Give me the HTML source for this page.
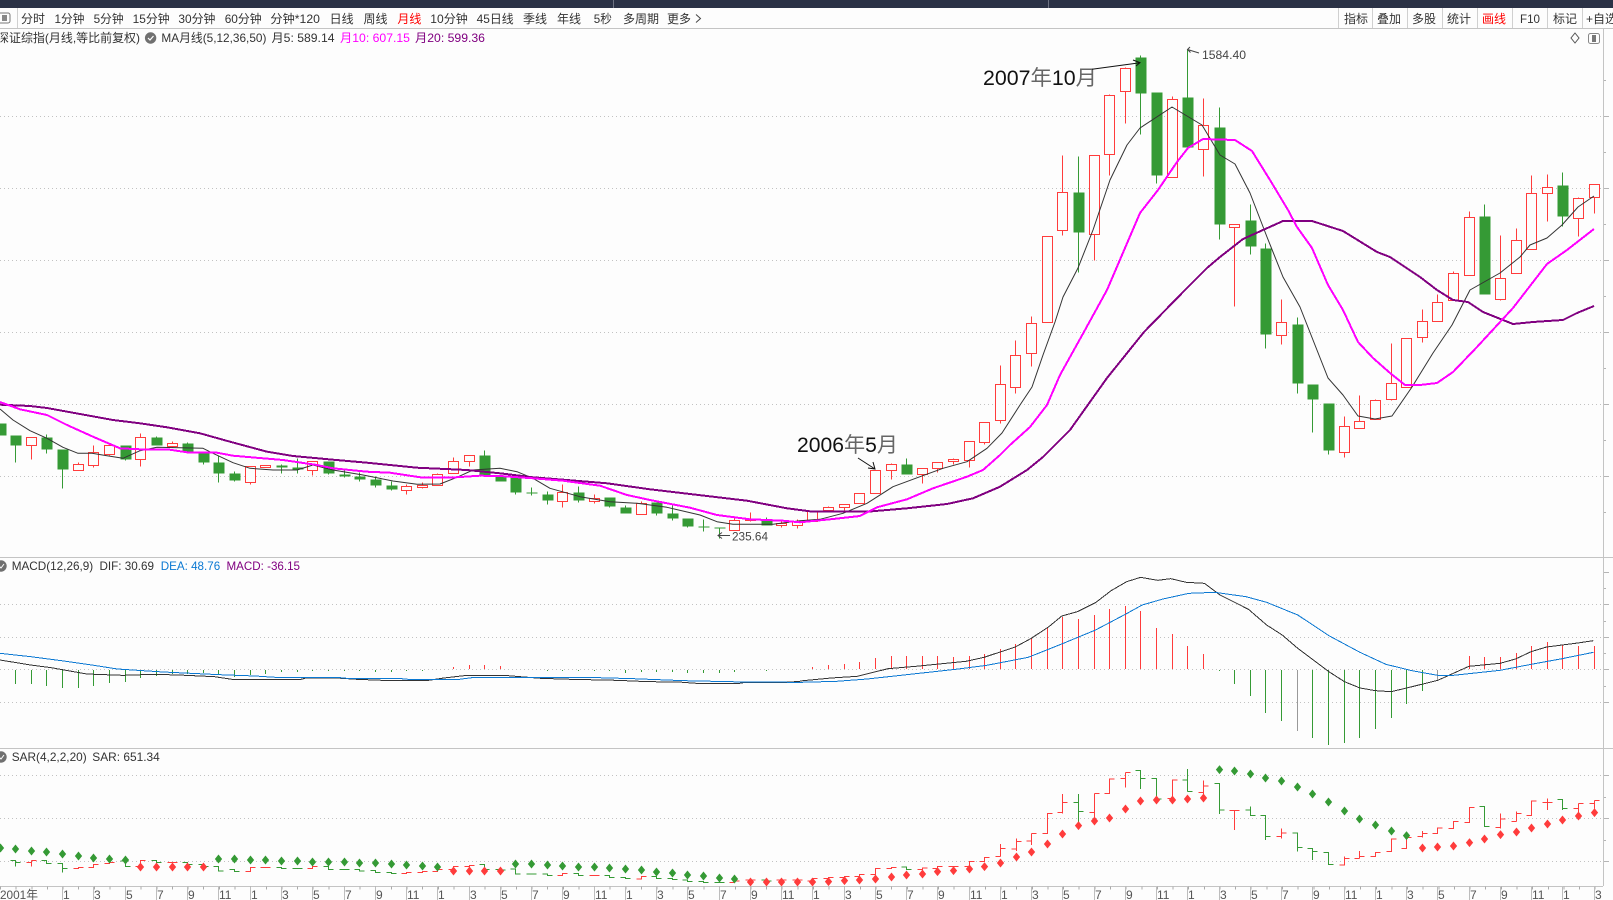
<!DOCTYPE html>
<html><head><meta charset="utf-8"><title>K</title>
<style>
html,body{margin:0;padding:0;background:#fdfdfd;width:1613px;height:900px;overflow:hidden}
svg{display:block;position:absolute;left:0;top:0}
text{font-family:"Liberation Sans","WenQuanYi Zen Hei","Noto Sans CJK SC",sans-serif;font-size:12px;fill:#333}
.c{shape-rendering:crispEdges}
.m{fill:none;stroke-linejoin:round}
.ax text{fill:#555}
</style></head><body>
<svg width="1613" height="900" viewBox="0 0 1613 900" xmlns="http://www.w3.org/2000/svg">
<rect width="1613" height="900" fill="#fdfdfd"/>
<!-- top bar -->
<rect width="1613" height="8" fill="#2b3246"/>
<path class="c" d="M613.5 0V8M1048.5 0V8" stroke="#6d7282" fill="none"/>
<!-- frame -->
<g class="c" stroke="#c4c4c4" fill="none">
<path d="M0 28.5H1613M0 557.5H1613M0 748.5H1613M0 886.5H1603M1603.5 29V886"/>
<path d="M17.5 8V28M1338.5 8V28M1372.5 8V28M1407.5 8V28M1442.5 8V28M1477.5 8V28M1512.5 8V28M1547.5 8V28M1582.5 8V28" stroke="#d0d0d0"/>
</g>
<!-- dotted grid -->
<path class="c" fill="none" stroke="#c2c2c2" stroke-dasharray="1 3" d="M0 116.5H1603M0 188.5H1603M0 260.5H1603M0 332.5H1603M0 404.5H1603M0 476.5H1603M0 604.5H1603M0 637.5H1603M0 669.5H1603M0 702.5H1603M0 775.5H1603M0 818.5H1603M0 861.5H1603"/>
<!-- right ticks -->
<path class="c" fill="none" stroke="#b5b5b5" d="M1604 116.5h5M1604 188.5h5M1604 260.5h5M1604 332.5h5M1604 404.5h5M1604 476.5h5M1604 80.5h2M1604 152.5h2M1604 224.5h2M1604 296.5h2M1604 368.5h2M1604 440.5h2M1604 512.5h2M1604 604.5h5M1604 637.5h5M1604 669.5h5M1604 702.5h5M1604 572.5h5M1604 588.5h2M1604 621.5h2M1604 653.5h2M1604 686.5h2M1604 775.5h5M1604 818.5h5M1604 861.5h5M1604 797.5h2M1604 840.5h2"/>

<!-- toolbar -->
<rect x="-4" y="13" width="14" height="10" rx="2" fill="none" stroke="#777"/>
<rect x="2" y="15" width="5" height="6" fill="#888"/>
<text x="21" y="23" textLength="24" lengthAdjust="spacingAndGlyphs">分时</text>
<text x="54.5" y="23" textLength="30" lengthAdjust="spacingAndGlyphs">1分钟</text>
<text x="93.6" y="23" textLength="30" lengthAdjust="spacingAndGlyphs">5分钟</text>
<text x="132.6" y="23" textLength="37" lengthAdjust="spacingAndGlyphs">15分钟</text>
<text x="178.4" y="23" textLength="37" lengthAdjust="spacingAndGlyphs">30分钟</text>
<text x="224.7" y="23" textLength="37" lengthAdjust="spacingAndGlyphs">60分钟</text>
<text x="270.4" y="23" textLength="49.5" lengthAdjust="spacingAndGlyphs">分钟*120</text>
<text x="329.6" y="23" textLength="24" lengthAdjust="spacingAndGlyphs">日线</text>
<text x="363.5" y="23" textLength="24" lengthAdjust="spacingAndGlyphs">周线</text>
<text x="397.4" y="23" textLength="24" lengthAdjust="spacingAndGlyphs" style="fill:#f00">月线</text>
<text x="430.3" y="23" textLength="37.5" lengthAdjust="spacingAndGlyphs">10分钟</text>
<text x="476.6" y="23" textLength="37" lengthAdjust="spacingAndGlyphs">45日线</text>
<text x="523" y="23" textLength="24" lengthAdjust="spacingAndGlyphs">季线</text>
<text x="557" y="23" textLength="24" lengthAdjust="spacingAndGlyphs">年线</text>
<text x="593.8" y="23" textLength="18" lengthAdjust="spacingAndGlyphs">5秒</text>
<text x="623" y="23" textLength="36" lengthAdjust="spacingAndGlyphs">多周期</text>
<text x="667" y="23" textLength="24" lengthAdjust="spacingAndGlyphs">更多</text>
<path d="M696 14.5l4.5 4-4.5 4" fill="none" stroke="#444"/>
<text x="1344" y="23" textLength="24" lengthAdjust="spacingAndGlyphs">指标</text>
<text x="1377" y="23" textLength="24" lengthAdjust="spacingAndGlyphs">叠加</text>
<text x="1412" y="23" textLength="24" lengthAdjust="spacingAndGlyphs">多股</text>
<text x="1447" y="23" textLength="24" lengthAdjust="spacingAndGlyphs">统计</text>
<text x="1482" y="23" textLength="24" lengthAdjust="spacingAndGlyphs" style="fill:#f00">画线</text>
<text x="1520" y="23" textLength="20" lengthAdjust="spacingAndGlyphs">F10</text>
<text x="1553" y="23" textLength="24" lengthAdjust="spacingAndGlyphs">标记</text>
<text x="1586" y="23" textLength="31" lengthAdjust="spacingAndGlyphs">+自选</text>

<!-- legend -->
<text x="-3" y="42" textLength="143" lengthAdjust="spacingAndGlyphs">深证综指(月线,等比前复权)</text>
<circle cx="150.6" cy="38" r="5.7" fill="#707070"/>
<path d="M148 38l2 2 3.5-4" fill="none" stroke="#fff" stroke-width="1.2"/>
<text x="161.4" y="42" textLength="105" lengthAdjust="spacingAndGlyphs">MA月线(5,12,36,50)</text>
<text x="271.5" y="42" textLength="63" lengthAdjust="spacingAndGlyphs">月5: 589.14</text>
<text x="340" y="42" textLength="70" lengthAdjust="spacingAndGlyphs" style="fill:#f0f">月10: 607.15</text>
<text x="415" y="42" textLength="70" lengthAdjust="spacingAndGlyphs" style="fill:#800080">月20: 599.36</text>
<path d="M1575 33l4 5-4 5-4-5z" fill="none" stroke="#555"/>
<rect x="1588.5" y="33.5" width="11" height="10" rx="2" fill="none" stroke="#888"/>
<rect x="1592" y="35" width="4" height="7" fill="#777"/>

<!-- candle wicks & bodies -->
<g class="c" transform="translate(.5,.5)">
<path fill="none" stroke="#359a35" d="M15 445V462M46 434V453M62 469V488M125 459V460M156 436V445M187 442V453M203 462V464M218 455V482M234 471V481M281 464V473M297 458V473M328 473V474M344 470V477M359 472V481M375 476V487M391 481V490M484 450V476M515 492V494M531 487V495M547 491V504M578 486V502M609 506V507M625 505V507M656 513V515M672 504V520M687 526V527M703 519V531M719 527V538M766 517V519M906 458V464M1078 156V272M1140 55V134M1156 175V183M1187 49V97M1219 107V239M1250 204V254M1265 243V348M1297 317V393M1312 399V432M1328 450V454M1484 204V216M1562 172V226"/>
<path fill="#359a35" d="M-5 423h11v12h-11zM10 435h11v10h-11zM41 437h11v12h-11zM57 449h11v20h-11zM120 445h11v14h-11zM151 437h11v8h-11zM182 443h11v9h-11zM198 452h11v10h-11zM213 462h11v11h-11zM229 473h11v7h-11zM276 465h11v2h-11zM292 467h11v2h-11zM323 461h11v12h-11zM339 474h11v2h-11zM354 476h11v3h-11zM370 479h11v6h-11zM386 485h11v4h-11zM479 455h11v20h-11zM495 475h11v6h-11zM510 477h11v15h-11zM526 492h11v1h-11zM542 494h11v6h-11zM573 492h11v8h-11zM604 497h11v9h-11zM620 507h11v6h-11zM651 502h11v11h-11zM667 513h11v5h-11zM682 518h11v8h-11zM698 526h11v1h-11zM714 527h11v1h-11zM761 519h11v6h-11zM901 464h11v10h-11zM1073 192h11v40h-11zM1135 57h11v36h-11zM1151 92h11v83h-11zM1182 97h11v50h-11zM1214 127h11v97h-11zM1245 220h11v26h-11zM1260 248h11v86h-11zM1292 324h11v59h-11zM1307 384h11v15h-11zM1323 403h11v47h-11zM1479 216h11v78h-11zM1557 185h11v31h-11z"/>
<path fill="none" stroke="#ff3c3c" d="M31 445V459M78 462V464M93 445V467M109 454V455M140 433V466M172 441V447M250 482V484M312 470V475M406 484V494M422 482V488M437 473V474M453 457V461M469 461V466M562 484V507M594 494V503M641 501V503M734 518V520M750 512V521M781 521V527M797 519V528M828 506V511M844 507V512M891 463V479M922 474V483M937 468V472M953 458V464M969 460V467M984 442V444M1000 365V423M1015 340V393M1031 316V366M1062 155V235M1094 234V260M1109 94V175M1125 67V123M1172 96V99M1203 98V176M1234 227V306M1281 299V344M1344 416V457M1359 395V421M1375 399V400M1391 343V400M1422 309V342M1437 294V302M1453 271V273M1469 211V217M1500 235V300M1516 228V240M1531 175V193M1547 174V221M1578 197V236M1594 197V213"/>
<path fill="#fdfdfd" stroke="#ff3c3c" d="M26 437h10v8h-10zM73 464h10v6h-10zM88 452h10v13h-10zM104 445h10v9h-10zM135 437h10v22h-10zM167 443h10v3h-10zM245 466h10v16h-10zM260 465h10v2h-10zM307 461h10v9h-10zM401 486h10v4h-10zM417 485h10v2h-10zM432 474h10v11h-10zM448 461h10v12h-10zM464 455h10v6h-10zM557 492h10v9h-10zM589 498h10v3h-10zM636 503h10v11h-10zM729 520h10v10h-10zM745 519h10v1h-10zM776 523h10v2h-10zM792 521h10v4h-10zM807 511h10v10h-10zM823 507h10v3h-10zM839 504h10v3h-10zM854 493h10v10h-10zM870 470h10v23h-10zM886 464h10v6h-10zM917 468h10v6h-10zM932 462h10v6h-10zM948 459h10v2h-10zM964 441h10v19h-10zM979 422h10v20h-10zM995 384h10v36h-10zM1010 355h10v32h-10zM1026 323h10v30h-10zM1042 236h10v86h-10zM1057 192h10v38h-10zM1089 155h10v79h-10zM1104 95h10v59h-10zM1120 68h10v23h-10zM1167 99h10v78h-10zM1198 125h10v24h-10zM1229 224h10v3h-10zM1276 322h10v13h-10zM1339 426h10v26h-10zM1354 421h10v7h-10zM1370 400h10v19h-10zM1386 383h10v16h-10zM1401 338h10v49h-10zM1417 321h10v16h-10zM1432 302h10v19h-10zM1448 273h10v27h-10zM1464 217h10v58h-10zM1495 278h10v21h-10zM1511 240h10v33h-10zM1526 193h10v56h-10zM1542 187h10v6h-10zM1573 198h10v20h-10zM1589 184h10v13h-10z"/>
</g>

<!-- MA lines -->
<polyline class="m" stroke="#333" stroke-width="1" points="0,409 13,420 30,430.7 47,438.3 63,447.3 78,453.3 92,453.3 107,455.7 123,458.3 140,450.7 157,447.3 203,448.3 213,453.3 233,462.7 250,468.3 273,470 297,470 313,465 333,470 363,475 393,481 417,484.3 440,484 457,477.3 473,470 500,468.3 517,471.7 533,478.3 550,488.3 580,496.7 610,501.7 637,503.3 667,507.3 700,515 717,521.7 733,524.3 773,524.3 800,520.7 820,519.3 843,513.3 867,503.3 893,486.7 920,476.7 943,468.3 967,461.7 987,448.3 1002,433 1020,405 1032,387 1043,355 1055,322 1063,297 1078,268 1093,230 1110,180 1127,145 1140,128 1172,107 1202,125 1217,150 1220,155 1235,164 1250,193 1267,237 1283,277 1300,307 1313,340 1328,378 1343,395 1358,416 1375,419 1392,416 1412,387 1433,353 1452,325 1470,290 1500,273 1520,257 1530,245 1547,238 1562,225 1578,207 1594,196"/>
<polyline class="m c" stroke="#800080" stroke-width="2" points="0,404.7 30,406 47,408 80,414 113,420 140,423.3 167,427.3 200,433.3 230,441.7 267,451.7 293,456 333,459.7 367,462.7 417,467.7 467,470 500,473.3 533,477.3 567,480 607,483.3 650,489.3 707,496 747,500.7 787,508.3 813,511.7 867,511.7 907,508.3 947,504 973,498.3 1000,486.7 1027,470 1043,457 1070,430 1107,378 1144,332 1185,290 1207,268 1220,257 1243,239 1263,230 1283,221 1312,221 1343,231 1377,252 1390,257 1420,277 1437,290 1453,300 1468,302 1483,312 1513,324 1533,322 1563,320 1577,313 1594,306"/>
<polyline class="m c" stroke="#f0f" stroke-width="2" points="0,402 20,409.3 47,415 67,425 93,436.7 120,448.3 140,449.3 167,449.3 187,452.3 217,452.7 233,455.7 263,458.3 283,460 317,465 333,468.3 367,471.7 390,472.7 423,477.7 450,477.7 480,475.7 500,476 533,478.3 563,480.7 600,485.7 627,495 650,500 690,507.7 717,515 750,519.3 783,520.7 800,522.3 833,519 860,516 877,507.3 907,499.3 933,488.3 967,476.7 983,470 1000,455 1010,445 1030,427 1047,405 1060,375 1085,330 1107,290 1140,213 1158,190 1177,162 1188,148 1203,139 1235,140 1252,151 1270,180 1288,210 1297,227 1312,248 1328,285 1343,310 1358,342 1373,358 1390,373 1405,385 1420,385 1437,383 1453,372 1477,347 1513,308 1547,264 1567,250 1594,229"/>

<!-- annotations -->
<text x="983" y="85" textLength="114" lengthAdjust="spacingAndGlyphs" style="font-size:21px;fill:#111">2007<tspan style="fill:#666">年</tspan>10<tspan style="fill:#666">月</tspan></text>
<text x="797" y="452" textLength="101" lengthAdjust="spacingAndGlyphs" style="font-size:21px;fill:#111">2006<tspan style="fill:#666">年</tspan>5<tspan style="fill:#666">月</tspan></text>
<path fill="none" stroke="#111" d="M1092 69.3L1140 62.7M1133 60L1140 62.7L1136 66M858 458L875 469M868 468L875 469L873 462"/>
<text x="732" y="540.5" textLength="36" lengthAdjust="spacingAndGlyphs" style="fill:#444">235.64</text>
<text x="1202" y="59" textLength="44" lengthAdjust="spacingAndGlyphs" style="fill:#444">1584.40</text>
<path fill="none" stroke="#444" d="M730 535.5H718M722 532.5L718 535.5L722 538.5M1199 53L1187.5 49.5M1190 47L1187.5 49.5L1190.5 52.5"/>

<!-- MACD bars -->
<path class="c" transform="translate(.5,0)" fill="none" stroke="#359a35" d="M15 670V684M31 670V684M46 670V686M62 670V688M78 670V688M93 670V686M109 670V683M125 670V682M140 670V678M156 670V676M172 670V674M187 670V674M203 670V673M218 670V675M234 670V677M250 670V675M265 670V674M281 670V672M297 670V672M312 670V671M328 670V671M344 670V671M359 670V671M375 670V672M391 670V672M406 670V671M422 670V671M547 670V671M562 670V671M578 670V671M594 670V671M609 670V671M625 670V673M641 670V672M656 670V672M672 670V672M687 670V673M703 670V673M719 670V673M734 670V672M766 670V671M1219 670V671M1234 670V684M1250 670V696M1265 670V713M1281 670V721M1312 670V738M1328 670V745M1344 670V743M1359 670V738M1375 670V729M1391 670V718M1406 670V704M1422 670V691"/>
<path class="c" transform="translate(.5,0)" fill="none" stroke="#999" d="M1297 670V731M1437 670V680"/>
<path class="c" transform="translate(.5,0)" fill="none" stroke="#ff3c3c" d="M453 669V667M469 669V665M484 669V665M500 669V666M812 669V667M828 669V665M844 669V664M859 669V662M875 669V658M891 669V656M906 669V656M922 669V656M937 669V656M953 669V657M969 669V656M984 669V654M1000 669V649M1015 669V644M1031 669V638M1047 669V627M1062 669V617M1078 669V619M1094 669V615M1109 669V609M1125 669V606M1140 669V611M1156 669V628M1172 669V634M1187 669V646M1203 669V654M1469 669V656M1484 669V657M1500 669V657M1516 669V653M1531 669V646M1547 669V642M1562 669V645M1578 669V646M1594 669V646"/>
<!-- MACD lines -->
<g transform="translate(0,550) scale(.5102,.33333)">
<polyline class="m c" vector-effect="non-scaling-stroke" stroke="#333" points="0,330 60,345 100,353 170,372 240,376 300,373 350,375 420,380 455,388 590,388 600,384 660,384 700,388 750,391 840,391 870,384 910,377 995,377 1060,385 1120,388 1210,391 1270,395 1330,396 1365,400 1450,400 1460,397 1540,397 1568,394"/>
<polyline class="m c" vector-effect="non-scaling-stroke" stroke="#0a78d2" points="0,310 60,320 120,332 180,345 230,357 320,366 430,374 500,378 540,382 660,382 680,385 780,385 800,388 900,388 930,382 1150,382 1240,386 1340,392 1460,396 1568,397"/>
</g>
<g transform="translate(800,550) scale(.5185,.33333)">
<polyline class="m c" vector-effect="non-scaling-stroke" stroke="#333" points="0,393 60,384 110,379 170,356 230,348 320,334 355,322 415,291 445,266 480,230 505,198 535,185 570,158 600,122 630,95 657,82 690,91 715,86 745,97 780,100 810,135 865,178 900,225 930,255 960,295 1020,365 1050,395 1080,414 1110,422 1140,425 1170,414 1230,391 1290,349 1350,340 1380,327 1410,305 1440,291 1500,279 1530,272"/>
<polyline class="m c" vector-effect="non-scaling-stroke" stroke="#0a78d2" points="0,397 70,394 130,387 200,375 300,358 360,346 440,322 500,285 570,240 625,195 660,165 700,147 750,130 800,127 860,140 900,157 960,195 1020,257 1080,307 1130,343 1180,362 1230,376 1260,376 1350,361 1410,343 1470,326 1530,307"/>
</g>
<!-- MACD legend -->
<circle cx="1" cy="566" r="5.7" fill="#707070"/>
<path d="M-1 566l2 2 3-4" fill="none" stroke="#fff"/>
<text x="11.7" y="570" textLength="81.5" lengthAdjust="spacingAndGlyphs">MACD(12,26,9)</text>
<text x="99.5" y="570" textLength="54.5" lengthAdjust="spacingAndGlyphs">DIF: 30.69</text>
<text x="160.7" y="570" textLength="59.5" lengthAdjust="spacingAndGlyphs" style="fill:#0a78d2">DEA: 48.76</text>
<text x="226.5" y="570" textLength="73.5" lengthAdjust="spacingAndGlyphs" style="fill:#800080">MACD: -36.15</text>

<!-- SAR legend -->
<circle cx="1" cy="757" r="5.7" fill="#707070"/>
<path d="M-1 757l2 2 3-4" fill="none" stroke="#fff"/>
<text x="11.7" y="761" textLength="75" lengthAdjust="spacingAndGlyphs">SAR(4,2,2,20)</text>
<text x="92.3" y="761" textLength="67.5" lengthAdjust="spacingAndGlyphs">SAR: 651.34</text>

<!-- SAR OHLC -->
<g transform="translate(.5,745) scale(1,.33333)">
<path class="c" vector-effect="non-scaling-stroke" fill="none" stroke="#ff3c3c" d="M26 352H31M31 346V365M31 346H36M73 370H78V367H83M88 367H93V358H98M104 356H109V352H114M135 364H140V346H145M167 352H177M245 380H250V367H255M260 367H270M307 370H312V365H317M401 385H406V383H411M417 382H422V380H427M432 379H437V374H442M448 374H453V364H458M464 364H469V361H474M557 392H562V385H567M589 392H599M636 402H641V394H646M729 412H734V408H739M745 405H755M776 405H786M792 405H802M807 408H812V400H817M823 400H828V398H833M839 398H844V395H849M854 395H859V388H864M870 388H875V371H880M886 371H891V367H896M917 373H922V369H927M932 370H937V364H942M948 364H958M964 364H969V350H974M979 350H984V337H989M995 335H1000M1000 297V335M1000 310H1005M1011 312H1016M1016 280V318M1016 289H1021M1026 288H1031M1031 265V300M1031 265H1036M1042 265H1047V205H1052M1057 202H1062M1062 147V205M1062 172H1067M1089 203H1094M1094 145V235M1094 145H1099M1104 145H1109V102H1114M1120 100H1125M1125 82V127M1125 82H1130M1167 160H1172V105H1177M1198 143H1203M1203 106V170M1203 123H1208M1229 197H1239M1234 197V255M1276 274H1281M1281 250V280M1281 264H1286M1339 360H1344V335M1344 340H1349M1354 340H1359M1359 318V340M1359 334H1364M1370 334H1375V322H1380M1386 320H1391V282H1396M1401 310H1406V278H1411M1417 275H1422M1422 258V278M1422 265H1427M1432 265H1437V249H1442M1448 250H1453V229H1458M1464 232H1469V188H1474M1495 248H1500M1500 205V250M1500 222H1505M1511 229H1516M1516 200V229M1516 205H1521M1526 212H1531V168H1536M1542 172H1552M1547 160V195M1573 190H1578M1578 176V202M1578 176H1583M1589 176H1594M1594 166V190M1594 166H1599"/>
<path class="c" vector-effect="non-scaling-stroke" fill="none" stroke="#359a35" d="M10 347H15V365M15 352H20M41 346H46V355H51M57 355H62V383M62 370H67M120 348H125V364H130M151 346H156V352H161M182 352H187V358H192M198 358H203V365H208M213 365H218V378H223M229 373H234V380H239M276 367H281V370H286M292 370H302M323 364H328V373H333M339 373H349M354 373H359V378H364M370 377H375V382H380M386 382H391V385H396M479 358H484V373H489M495 373H500V375H505M510 372H515V387H520M526 387H536M542 387H547V392H552M573 385H578V392H583M604 392H609V397H614M620 397H625V400H630M651 394H656V400H661M667 400H672V404H677M682 405H687V409H692M698 410H703V412H708M714 412H724M761 405H766V408H771M901 366H906V373H911M1073 172H1078M1078 147V240M1078 200H1083M1135 76H1140V132M1140 100H1145M1151 100H1156V162H1161M1182 105H1187M1187 72V139M1187 139H1192M1214 115H1219V207M1219 195H1224M1245 195H1250M1250 184V212H1255M1260 212H1265V285M1265 274H1270M1292 264H1297V320M1297 307H1302M1307 310H1312V345M1312 320H1317M1323 322H1328V358H1333M1479 185H1484V244H1489M1557 163H1562V195M1562 190H1567"/>
<path vector-effect="non-scaling-stroke" stroke="#359a35" stroke-width="1" fill="#359a35" d="M0 298l3 11-3 11-3-11zM15 301l3 11-3 11-3-11zM31 307l3 11-3 11-3-11zM46 310l3 11-3 11-3-11zM62 316l3 11-3 11-3-11zM78 322l3 11-3 11-3-11zM93 328l3 11-3 11-3-11zM109 331l3 11-3 11-3-11zM125 334l3 11-3 11-3-11zM218 331l3 11-3 11-3-11zM234 331l3 11-3 11-3-11zM250 334l3 11-3 11-3-11zM265 334l3 11-3 11-3-11zM281 337l3 11-3 11-3-11zM297 337l3 11-3 11-3-11zM312 340l3 11-3 11-3-11zM328 340l3 11-3 11-3-11zM344 340l3 11-3 11-3-11zM359 343l3 11-3 11-3-11zM375 343l3 11-3 11-3-11zM391 346l3 11-3 11-3-11zM406 349l3 11-3 11-3-11zM422 352l3 11-3 11-3-11zM437 355l3 11-3 11-3-11zM515 346l3 11-3 11-3-11zM531 346l3 11-3 11-3-11zM547 349l3 11-3 11-3-11zM562 352l3 11-3 11-3-11zM578 355l3 11-3 11-3-11zM594 355l3 11-3 11-3-11zM609 358l3 11-3 11-3-11zM625 361l3 11-3 11-3-11zM641 364l3 11-3 11-3-11zM656 370l3 11-3 11-3-11zM672 373l3 11-3 11-3-11zM687 379l3 11-3 11-3-11zM703 382l3 11-3 11-3-11zM719 388l3 11-3 11-3-11zM734 391l3 11-3 11-3-11zM1219 63l3 11-3 11-3-11zM1234 67l3 11-3 11-3-11zM1250 76l3 11-3 11-3-11zM1265 88l3 11-3 11-3-11zM1281 97l3 11-3 11-3-11zM1297 115l3 11-3 11-3-11zM1312 136l3 11-3 11-3-11zM1328 160l3 11-3 11-3-11zM1344 187l3 11-3 11-3-11zM1359 211l3 11-3 11-3-11zM1375 229l3 11-3 11-3-11zM1391 247l3 11-3 11-3-11zM1406 261l3 11-3 11-3-11z"/>
<path vector-effect="non-scaling-stroke" stroke="#ff3c3c" stroke-width="1" fill="#ff3c3c" d="M140 355l3 11-3 11-3-11zM156 355l3 11-3 11-3-11zM172 355l3 11-3 11-3-11zM187 355l3 11-3 11-3-11zM203 355l3 11-3 11-3-11zM453 367l3 11-3 11-3-11zM469 367l3 11-3 11-3-11zM484 367l3 11-3 11-3-11zM500 367l3 11-3 11-3-11zM750 400l3 11-3 11-3-11zM766 400l3 11-3 11-3-11zM781 400l3 11-3 11-3-11zM797 400l3 11-3 11-3-11zM812 400l3 11-3 11-3-11zM828 399l3 11-3 11-3-11zM844 396l3 11-3 11-3-11zM859 394l3 11-3 11-3-11zM875 391l3 11-3 11-3-11zM891 385l3 11-3 11-3-11zM906 379l3 11-3 11-3-11zM922 376l3 11-3 11-3-11zM937 369l3 11-3 11-3-11zM953 366l3 11-3 11-3-11zM969 361l3 11-3 11-3-11zM984 354l3 11-3 11-3-11zM1000 343l3 11-3 11-3-11zM1016 325l3 11-3 11-3-11zM1031 310l3 11-3 11-3-11zM1047 286l3 11-3 11-3-11zM1062 256l3 11-3 11-3-11zM1078 231l3 11-3 11-3-11zM1094 217l3 11-3 11-3-11zM1109 208l3 11-3 11-3-11zM1125 181l3 11-3 11-3-11zM1140 157l3 11-3 11-3-11zM1156 154l3 11-3 11-3-11zM1172 154l3 11-3 11-3-11zM1187 151l3 11-3 11-3-11zM1203 148l3 11-3 11-3-11zM1422 298l3 11-3 11-3-11zM1437 295l3 11-3 11-3-11zM1453 292l3 11-3 11-3-11zM1469 282l3 11-3 11-3-11zM1484 271l3 11-3 11-3-11zM1500 258l3 11-3 11-3-11zM1516 250l3 11-3 11-3-11zM1531 238l3 11-3 11-3-11zM1547 226l3 11-3 11-3-11zM1562 214l3 11-3 11-3-11zM1578 202l3 11-3 11-3-11zM1594 192l3 11-3 11-3-11z"/>
</g>

<!-- bottom axis -->
<path class="c" d="M0 888H1603" stroke="#aaa" stroke-width="3" stroke-dasharray="1 14.634" fill="none"/>
<path class="c" fill="none" stroke="#bdbdbd" d="M62.5 887V900M93.5 887V900M125.5 887V900M156.5 887V900M187.5 887V900M218.5 887V900M250.5 887V900M281.5 887V900M312.5 887V900M344.5 887V900M375.5 887V900M406.5 887V900M437.5 887V900M469.5 887V900M500.5 887V900M531.5 887V900M562.5 887V900M594.5 887V900M625.5 887V900M656.5 887V900M687.5 887V900M719.5 887V900M750.5 887V900M781.5 887V900M812.5 887V900M844.5 887V900M875.5 887V900M906.5 887V900M937.5 887V900M969.5 887V900M1000.5 887V900M1031.5 887V900M1062.5 887V900M1094.5 887V900M1125.5 887V900M1156.5 887V900M1187.5 887V900M1219.5 887V900M1250.5 887V900M1281.5 887V900M1312.5 887V900M1344.5 887V900M1375.5 887V900M1406.5 887V900M1437.5 887V900M1469.5 887V900M1500.5 887V900M1531.5 887V900M1562.5 887V900M1594.5 887V900"/>
<g class="ax" transform="translate(-2,0)">
<text x="2" y="899" textLength="38" lengthAdjust="spacingAndGlyphs">2001年</text>
<text x="65" y="899">1</text><text x="96" y="899">3</text><text x="128" y="899">5</text><text x="159" y="899">7</text><text x="190" y="899">9</text><text x="221" y="899">11</text>
<text x="253" y="899">1</text><text x="284" y="899">3</text><text x="315" y="899">5</text><text x="347" y="899">7</text><text x="378" y="899">9</text><text x="409" y="899">11</text>
<text x="440" y="899">1</text><text x="472" y="899">3</text><text x="503" y="899">5</text><text x="534" y="899">7</text><text x="565" y="899">9</text><text x="597" y="899">11</text>
<text x="628" y="899">1</text><text x="659" y="899">3</text><text x="690" y="899">5</text><text x="722" y="899">7</text><text x="753" y="899">9</text><text x="784" y="899">11</text>
<text x="815" y="899">1</text><text x="847" y="899">3</text><text x="878" y="899">5</text><text x="909" y="899">7</text><text x="940" y="899">9</text><text x="972" y="899">11</text>
<text x="1003" y="899">1</text><text x="1034" y="899">3</text><text x="1065" y="899">5</text><text x="1097" y="899">7</text><text x="1128" y="899">9</text><text x="1159" y="899">11</text>
<text x="1190" y="899">1</text><text x="1222" y="899">3</text><text x="1253" y="899">5</text><text x="1284" y="899">7</text><text x="1315" y="899">9</text><text x="1347" y="899">11</text>
<text x="1378" y="899">1</text><text x="1409" y="899">3</text><text x="1440" y="899">5</text><text x="1472" y="899">7</text><text x="1503" y="899">9</text><text x="1534" y="899">11</text>
<text x="1565" y="899">1</text><text x="1597" y="899">3</text>
</g>
</svg>
</body></html>
